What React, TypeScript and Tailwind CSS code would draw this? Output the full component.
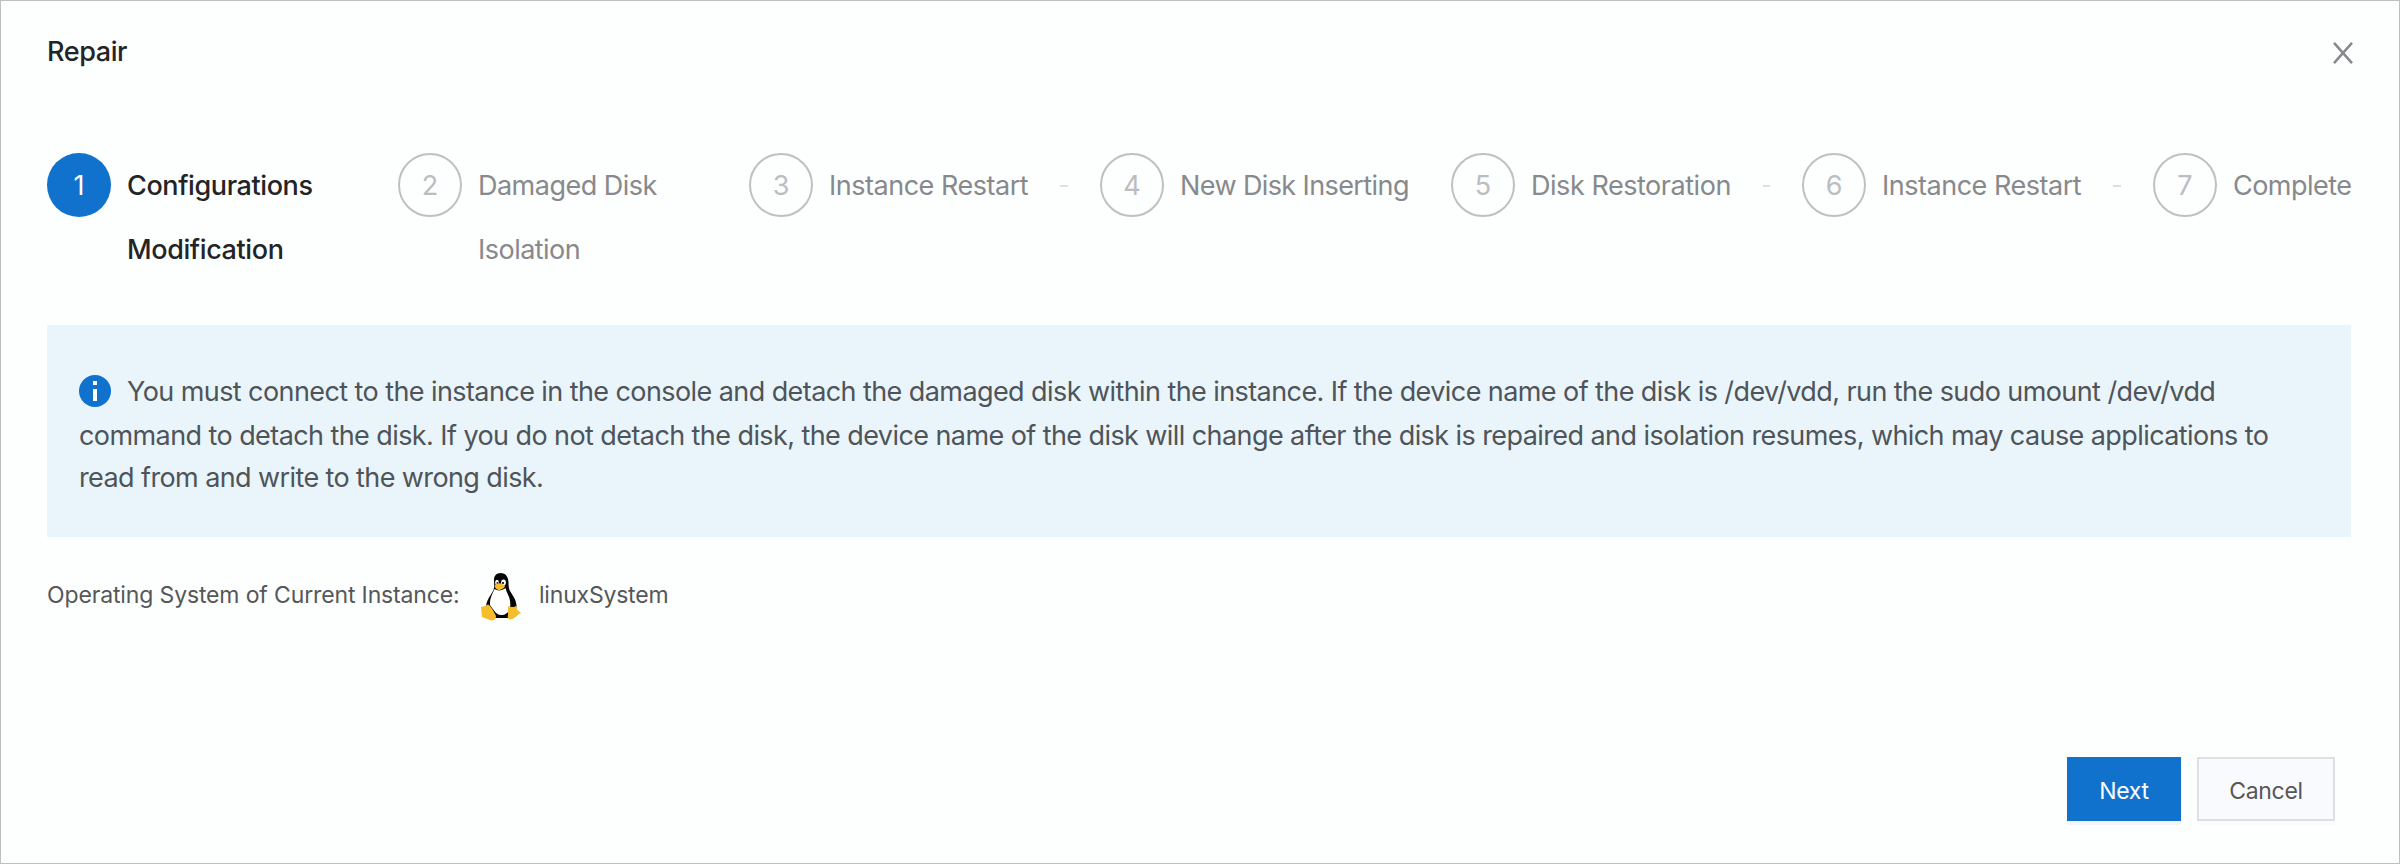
import clsx from 'clsx';

interface Step {
  lines: string[];
  tracking: string;
}

const STEPS: Step[] = [
  { lines: ['Configurations', 'Modification'], tracking: 'tracking-[-0.4px]' },
  { lines: ['Damaged Disk', 'Isolation'], tracking: 'tracking-[-0.52px]' },
  { lines: ['Instance Restart'], tracking: 'tracking-[-0.48px]' },
  { lines: ['New Disk Inserting'], tracking: 'tracking-[-0.6px]' },
  { lines: ['Disk Restoration'], tracking: 'tracking-[-0.46px]' },
  { lines: ['Instance Restart'], tracking: 'tracking-[-0.48px]' },
  { lines: ['Complete'], tracking: 'tracking-[-0.52px]' },
];

// steps followed by a visible piece of the connector line
const WITH_TAIL = [2, 4, 5];

function Tux() {
  return (
    <svg width="40" height="48" viewBox="0 0 40 48">
      <path
        d="M20 0c-5 0-7.200 3-7 8 .1 3 .6 6-.5 9C10 22 6 26 5 33c2 5 6 11 9 12h14c4-2 7-6 7.500-11C36 27 31 22 28.500 17 27 13 28 9 27 6c-1-4-3.500-6-7-6z"
        fill="#050505"
      />
      <path d="M13.500 16c3 2 7.500 2 11-1 1 5 5 9 4.800 17-.2 7-4.300 10-9.300 10-4 0-6-3-11-10-.5-6 2-10 4.500-16z" fill="#fff" />
      <ellipse cx="16" cy="9.500" rx="1.900" ry="2.700" fill="#fff" />
      <ellipse cx="22.500" cy="9.500" rx="2.400" ry="2.900" fill="#fff" />
      <circle cx="16.500" cy="10" r="1" fill="#050505" />
      <circle cx="22" cy="10" r="1.100" fill="#050505" />
      <path d="M13.500 13c2-2.500 4-3 6-2.500 2 .5 4 1 4.500 2.500-.5 2-4 4-6 4s-4-2-4.500-4z" fill="#f5bd2c" />
      <path d="M0 34l4-1 3-1.500c2 0 7 9 8 11.500 0 3-2 4.500-4.500 4.500L1 44z" fill="#f5bd2c" />
      <path d="M27 33c3 1.500 6 1.500 8.500-.5l.5 4 4 3.500c-4 2-7 6.500-10.500 6.500-3 0-3-2-2.500-5z" fill="#f5bd2c" />
    </svg>
  );
}

export default function App() {
  return (
    <div className="flex h-[864px] w-[2400px] flex-col border border-[#bfbfbf] bg-[#fdfefe] font-['Inter','Liberation_Sans',sans-serif] text-[#55575a]">
      {/* Header */}
      <div className="flex h-[152px] items-start justify-between pl-[46px] pr-[46px]">
        <h3 className="mt-[31px] text-[27px] leading-[40px] font-medium tracking-[-0.4px] text-[#222426]">Repair</h3>
        <button className="mt-[41px]">
          <svg width="20" height="22" viewBox="0 0 20 22" fill="none" stroke="#87898c" strokeWidth="2.5">
            <path d="M1 .8l18 20.400M19 .8L1 21.200" />
          </svg>
        </button>
      </div>

      {/* Steps */}
      <div className="flex h-[172px] pl-[46px]">
        {STEPS.map((step, i) => (
          <div key={i} className="flex w-[351px] shrink-0 items-start last:w-auto">
            <div
              className={clsx(
                'flex h-16 w-16 shrink-0 items-center justify-center rounded-full pt-0.5 text-[27px]',
                i === 0 ? 'bg-[#1072cc] text-white' : 'border-2 border-[#bfc0c3] text-[#bcbdc0]'
              )}
            >
              {i + 1}
            </div>
            <div
              className={clsx(
                'mt-px ml-4 text-[27px] leading-[64px] whitespace-nowrap',
                step.tracking,
                i === 0 ? 'font-medium text-[#222426]' : 'text-[#87898c]'
              )}
            >
              {step.lines.map((line) => (
                <div key={line}>{line}</div>
              ))}
            </div>
            {WITH_TAIL.includes(i) && <div className="mt-8 mr-8 ml-8 h-[2px] flex-1 bg-[#dedfe1]" />}
          </div>
        ))}
      </div>

      {/* Notice */}
      <div className="mr-[48px] ml-[46px] h-[212px] bg-[#e9f4fb] px-8 pt-[45px] text-[27px] leading-[42px] whitespace-nowrap text-[#4f5459]">
        <div className="flex h-[45px] items-center">
          <svg width="32" height="32" viewBox="0 0 32 32" className="mr-4 mb-[3px]">
            <circle cx="16" cy="16" r="16" fill="#1072cc" />
            <path d="M14 6h4v4h-4zM14 14h4v12h-4z" fill="#fff" />
          </svg>
          <span className="mb-px tracking-[-0.58px]">
            You must connect to the instance in the console and detach the damaged disk within the instance. If the device name of the disk is /dev/vdd, run the sudo umount /dev/vdd
          </span>
        </div>
        <div className="tracking-[-0.58px]">
          command to detach the disk. If you do not detach the disk, the device name of the disk will change after the disk is repaired and isolation resumes, which may cause applications to
        </div>
        <div className="tracking-[-0.6px]">read from and write to the wrong disk.</div>
      </div>

      {/* Operating system */}
      <div className="mt-[36px] ml-[46px] flex h-[48px] items-center text-[23px]">
        <span className="mb-1 w-[434px] tracking-[-0.14px]">Operating System of Current Instance:</span>
        <Tux />
        <span className="mb-1 ml-[18px] tracking-[-0.2px]">linuxSystem</span>
      </div>

      {/* Actions */}
      <div className="mt-[136px] mr-[64px] flex justify-end gap-4 text-[23px]">
        <button className="h-16 w-[114px] bg-[#1072cc] pt-1 tracking-[-0.3px] text-white shadow-[0_4px_0_#f4f5f6]">Next</button>
        <button className="h-16 w-[138px] border-2 border-[#dedfe2] bg-[#f9fafd] pt-1 tracking-[-0.3px] shadow-[0_4px_0_#fafbfb]">
          Cancel
        </button>
      </div>
    </div>
  );
}
